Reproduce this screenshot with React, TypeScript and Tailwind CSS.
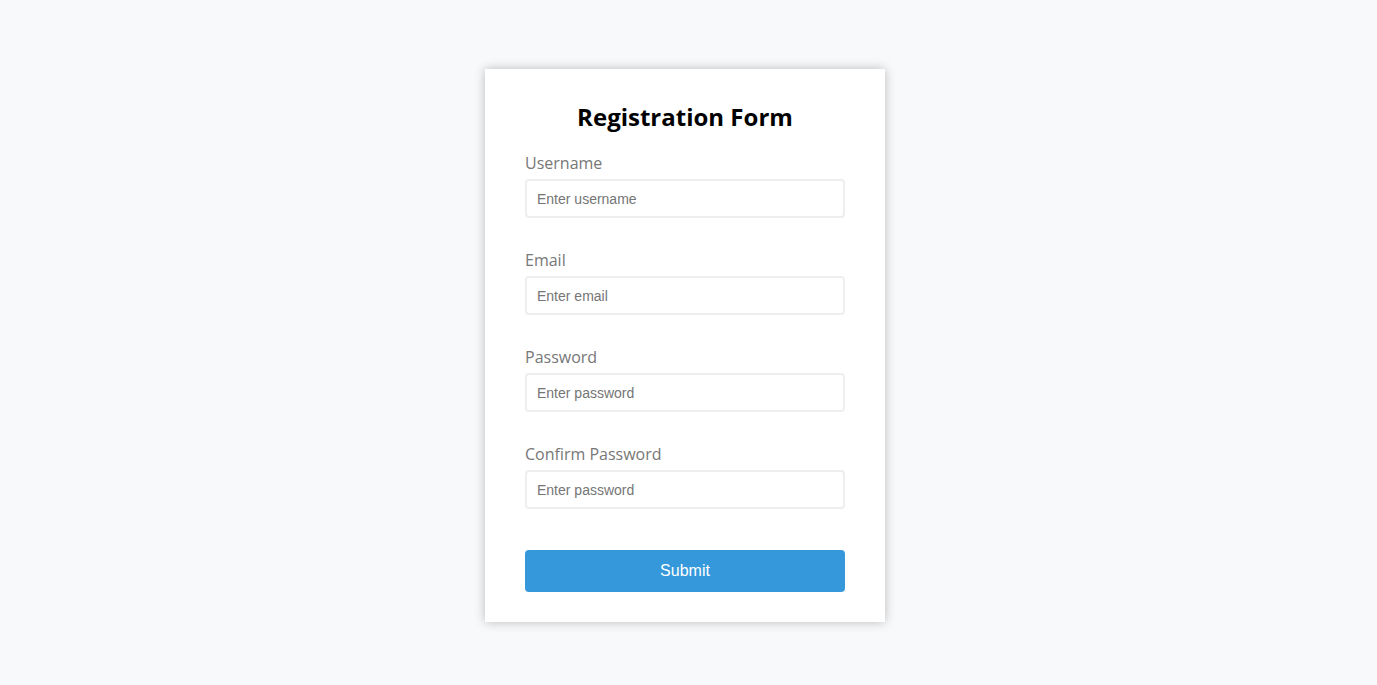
const fields = [
  { label: "Username", type: "text", placeholder: "Enter username" },
  { label: "Email", type: "email", placeholder: "Enter email" },
  { label: "Password", type: "password", placeholder: "Enter password" },
  { label: "Confirm Password", type: "password", placeholder: "Enter password" },
];

export default function App() {
  return (
    <div className="min-h-screen bg-[#f8f9fa] flex justify-center pt-[69px] pr-[7px]">
      <form className="w-[400px] h-[553px] bg-white shadow-[0_0_10px_rgba(0,0,0,0.25)] px-10 pt-[31px]">
        <h2 className="text-center text-[24px] font-bold text-black font-['Open_Sans',sans-serif] leading-[33px]">
          Registration Form
        </h2>
        <div className="mt-[19px] flex flex-col gap-[31px]">
          {fields.map((f) => (
            <div key={f.label} className="flex flex-col">
              <label className="text-[16px] leading-[22px] text-[#777] font-['Open_Sans',sans-serif] mb-[5px]">
                {f.label}
              </label>
              <input
                type={f.type}
                placeholder={f.placeholder}
                className="h-[39px] w-full border-2 border-[#eee] rounded-[4px] px-[10px] text-[14px] font-['Liberation_Sans',Arial,sans-serif] placeholder:text-[#757575] outline-none"
              />
            </div>
          ))}
        </div>
        <button
          type="button"
          className="mt-[41px] w-full h-[42px] bg-[#3498db] rounded-[4px] text-white text-[16px] font-['Liberation_Sans',Arial,sans-serif]"
        >
          Submit
        </button>
      </form>
    </div>
  );
}
